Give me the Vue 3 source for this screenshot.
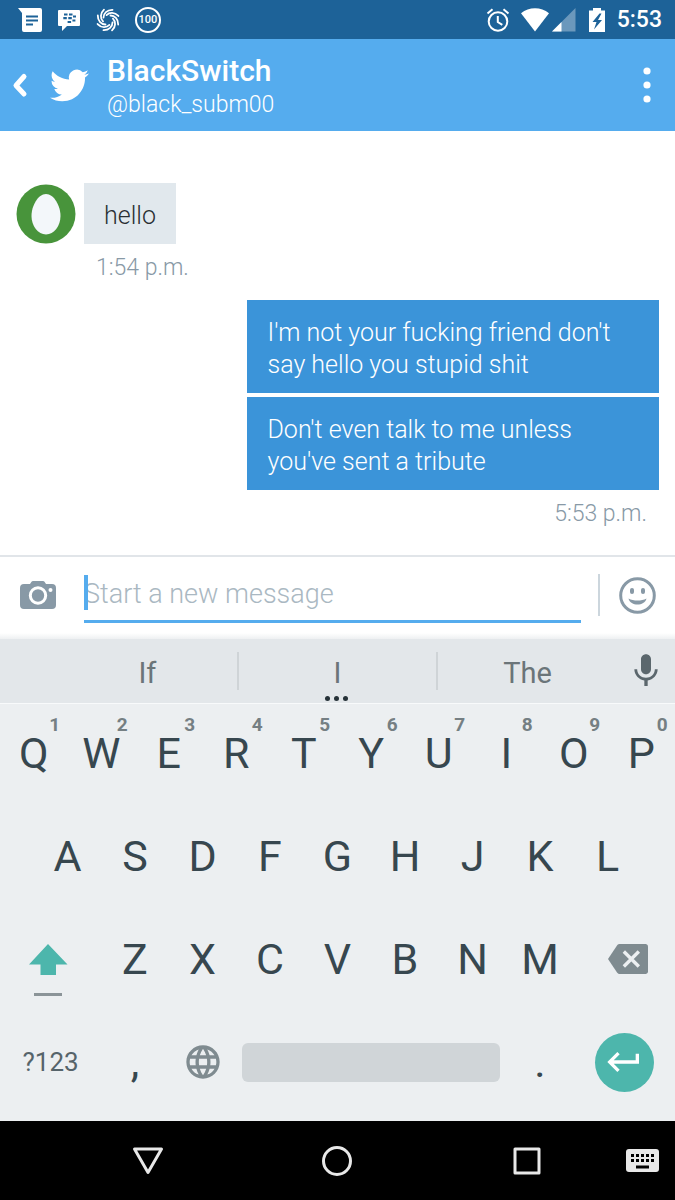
<script setup>
import { ref } from 'vue'

const message = ref('')
const suggestions = ['If', 'I', 'The']

const topRow = 'QWERTYUIOP'.split('').map((letter, index) => ({
  letter,
  hint: (index + 1) % 10
}))
const middleRow = 'ASDFGHJKL'.split('')
const bottomRow = 'ZXCVBNM'.split('')

const swirlAngles = [0, 45, 90, 135, 180, 225, 270, 315]

const typeKey = (char) => {
  message.value += char
}

const removeLast = () => {
  message.value = message.value.slice(0, -1)
}
</script>

<template>
  <div class="phone">
    <div class="status-bar">
      <div class="status-left">
        <svg width="24" height="24" viewBox="0 0 24 24">
          <path fill="#fff" d="M0 0h22a2 2 0 0 1 2 2v20a2 2 0 0 1-2 2H6a2 2 0 0 1-2-2V5z" />
          <path stroke="#1d6298" stroke-width="2" d="M8 8.500h12M8 12.500h12M8 16.500h7" />
        </svg>
        <svg width="24" height="24" viewBox="0 0 24 24">
          <path fill="#fff" d="M2 2h20a1 1 0 0 1 1 1v14a1 1 0 0 1-1 1H10l-5 5v-5H2a1 1 0 0 1-1-1V3a1 1 0 0 1 1-1z" />
          <path stroke="#1d6298" stroke-width="2.200" d="M7 6.500h3.500M12 6.500h3.500M6.300 10.200h3.500M11.300 10.200h3.500M16 8.500h3M15.400 12.500h3M10.600 14h3.500" />
        </svg>
        <svg width="24" height="24" viewBox="0 0 24 24" fill="none" stroke="#fff" stroke-width="1.800" stroke-linecap="round">
          <path
            v-for="angle in swirlAngles"
            :key="angle"
            d="M7.500 9.500C7.500 5.500 11 1.600 16.500 1.800"
            :transform="`rotate(${angle} 12 12)`"
          />
        </svg>
        <span class="percent">100</span>
      </div>
      <div class="status-right">
        <svg class="alarm" width="24" height="24" viewBox="0 0 24 24" fill="none" stroke="#fff" stroke-width="2">
          <circle cx="12" cy="13.500" r="9.300" />
          <path d="M11.800 8v6l4.500 2.800M1.500 5.500l5-4.200M22.500 5.500l-5-4.200" />
        </svg>
        <svg width="28" height="24" viewBox="0 0 28 24">
          <path fill="#fff" d="M0 5.200C8-1.400 20-1.400 28 5.200L14 23.500z" />
        </svg>
        <svg class="signal" width="24" height="24" viewBox="0 0 24 24">
          <path fill="#fff" fill-opacity=".35" d="M0 23.500L23.500 0v23.500z" />
          <path fill="#fff" d="M0 23.500l9.500-9.500v9.500z" />
        </svg>
        <svg class="battery" width="16" height="24" viewBox="0 0 16 24">
          <path fill="#fff" d="M4 0h8v2.500h4V24H0V2.500h4z" />
          <path fill="#1d6298" d="M10.500 5.500L3.500 14h4L5 21.500 13 12H9l3.500-6.500z" />
        </svg>
        <span class="clock">5:53</span>
      </div>
    </div>

    <header class="header">
      <button class="icon-button back" aria-label="Back">
        <svg width="16" height="26" viewBox="0 0 16 26" fill="none" stroke="#fff" stroke-width="5" stroke-linecap="round" stroke-linejoin="round">
          <path d="M12 4.500L4 13.500l8 8.500" />
        </svg>
      </button>
      <svg class="bird" width="39" height="39" viewBox="0 0 24 24" fill="#fff">
        <path d="M23.953 4.570a10 10 0 01-2.825.775 4.958 4.958 0 002.163-2.723c-.951.555-2.005.959-3.127 1.184a4.920 4.920 0 00-8.384 4.482C7.690 8.095 4.067 6.130 1.640 3.162a4.822 4.822 0 00-.666 2.475c0 1.710.870 3.213 2.188 4.096a4.904 4.904 0 01-2.228-.616v.060a4.923 4.923 0 003.946 4.827 4.996 4.996 0 01-2.212.085 4.936 4.936 0 004.604 3.417 9.867 9.867 0 01-6.102 2.105c-.390 0-.779-.023-1.170-.067a13.995 13.995 0 007.557 2.209c9.053 0 13.998-7.496 13.998-13.985 0-.210 0-.420-.015-.630A9.935 9.935 0 0024 4.590z" />
      </svg>
      <div class="contact">
        <h1 class="name">BlackSwitch</h1>
        <div class="handle">@black_subm00</div>
      </div>
      <button class="icon-button more" aria-label="More options">
        <svg width="8" height="36" viewBox="0 0 8 36" fill="#fff">
          <circle cx="4" cy="4" r="3.600" />
          <circle cx="4" cy="18" r="3.600" />
          <circle cx="4" cy="32" r="3.600" />
        </svg>
      </button>
    </header>

    <main class="chat">
      <div class="received">
        <svg class="avatar" width="60" height="60" viewBox="0 0 60 60">
          <circle cx="30" cy="30" r="29.500" fill="#48943b" />
          <path fill="#f3f7fa" d="M30 10c8 0 14.500 12 14.500 22S38 50.500 30 50.500 15.500 42 15.500 32 22 10 30 10z" />
        </svg>
        <p class="bubble">hello</p>
      </div>
      <div class="time time-received">1:54 p.m.</div>
      <div class="sent">
        <p class="bubble">I'm not your fucking friend don't say hello you stupid shit</p>
        <p class="bubble">Don't even talk to me unless you've sent a tribute</p>
      </div>
      <div class="time time-sent">5:53 p.m.</div>
    </main>

    <div class="composer">
      <button class="icon-button" aria-label="Add photo">
        <svg width="36" height="28" viewBox="0 0 36 28">
          <path fill="#8899a6" d="M4 3h6l1.500-2.200A2 2 0 0 1 13 0h10a2 2 0 0 1 1.500.8L26 3h6a4 4 0 0 1 4 4v17a4 4 0 0 1-4 4H4a4 4 0 0 1-4-4V7a4 4 0 0 1 4-4z" />
          <circle cx="18" cy="14.500" r="7.700" fill="none" stroke="#fff" stroke-width="3" />
          <circle cx="30.500" cy="9" r="2" fill="#fff" />
        </svg>
      </button>
      <div class="field">
        <input v-model="message" class="input" type="text" placeholder="Start a new message" aria-label="Start a new message" />
        <span v-if="!message" class="caret"></span>
      </div>
      <span class="divider"></span>
      <button class="icon-button" aria-label="Emoji">
        <svg width="37" height="37" viewBox="0 0 37 37">
          <circle cx="18.500" cy="18.500" r="16.800" fill="none" stroke="#8899a6" stroke-width="3" />
          <rect x="11" y="11" width="4" height="6" rx="2" fill="#8899a6" />
          <rect x="22" y="11" width="4" height="6" rx="2" fill="#8899a6" />
          <path fill="#8899a6" d="M9.500 21.500c5 2.800 13 2.800 18 0-2 8-16 8-18 0z" />
        </svg>
      </button>
    </div>

    <div class="keyboard">
      <div class="suggestions">
        <button v-for="word in suggestions" :key="word" class="suggestion" @click="typeKey(word + ' ')">
          {{ word }}
        </button>
        <button class="icon-button" aria-label="Voice input">
          <svg width="40" height="40" viewBox="0 0 24 24" fill="#5b676d">
            <path d="M12 14c1.660 0 3-1.340 3-3V5c0-1.660-1.340-3-3-3S9 3.340 9 5v6c0 1.660 1.340 3 3 3zm5.300-3c0 3-2.540 5.100-5.300 5.100S6.700 14 6.700 11H5c0 3.410 2.720 6.230 6 6.720V21h2v-3.280c3.280-.480 6-3.300 6-6.720h-1.700z" />
          </svg>
        </button>
      </div>

      <div class="row">
        <button v-for="key in topRow" :key="key.letter" class="key" @click="typeKey(key.letter)">
          {{ key.letter }}<span class="hint">{{ key.hint }}</span>
        </button>
      </div>
      <div class="row row-centered">
        <button v-for="letter in middleRow" :key="letter" class="key" @click="typeKey(letter)">{{ letter }}</button>
      </div>
      <div class="row">
        <button class="key wide shift" aria-label="Shift">
          <svg width="40" height="74" viewBox="0 0 40 74">
            <path fill="#4db6ac" d="M20 22l19.500 20.500H28V53H12.500V42.500H1z" />
            <path fill="#8b9498" d="M6 71h28v3H6z" />
          </svg>
        </button>
        <button v-for="letter in bottomRow" :key="letter" class="key" @click="typeKey(letter)">{{ letter }}</button>
        <button class="key wide backspace" aria-label="Delete" @click="removeLast">
          <svg width="40" height="40" viewBox="0 0 24 24">
            <path fill="#7f8b90" d="M22.500 3H7c-.690 0-1.230.350-1.590.880L0 12l5.410 8.110c.360.530.900.890 1.590.890h15.500c.800 0 1.500-.700 1.500-1.500v-15C24 3.700 23.300 3 22.500 3z" />
            <path stroke="#eceff1" stroke-width="2" d="M9.500 7.500l9 9M18.500 7.500l-9 9" />
          </svg>
        </button>
      </div>
      <div class="row">
        <button class="key wide symbols">?123</button>
        <button class="key" @click="typeKey(',')">,</button>
        <button class="key" aria-label="Switch language">
          <svg width="40" height="40" viewBox="0 0 24 24" fill="#7f8b90">
            <path d="M11.990 2C6.470 2 2 6.480 2 12s4.470 10 9.990 10C17.520 22 22 17.520 22 12S17.520 2 11.990 2zm6.930 6h-2.950a15.650 15.650 0 0 0-1.380-3.560A8.030 8.030 0 0 1 18.920 8zM12 4.040c.830 1.200 1.480 2.530 1.910 3.960h-3.820c.430-1.430 1.080-2.760 1.910-3.960zM4.260 14C4.100 13.360 4 12.690 4 12s.100-1.360.260-2h3.380c-.080.660-.140 1.320-.140 2s.060 1.340.140 2H4.260zm.820 2h2.950c.320 1.250.780 2.450 1.380 3.560A7.987 7.987 0 0 1 5.080 16zm2.950-8H5.080a7.987 7.987 0 0 1 4.330-3.560A15.650 15.650 0 0 0 8.030 8zM12 19.960c-.830-1.200-1.480-2.530-1.910-3.960h3.820c-.430 1.430-1.080 2.760-1.910 3.960zM14.340 14H9.660c-.090-.660-.160-1.320-.160-2s.070-1.350.160-2h4.680c.090.650.160 1.320.160 2s-.070 1.340-.160 2zm.250 5.560c.600-1.110 1.060-2.310 1.380-3.560h2.950a8.030 8.030 0 0 1-4.330 3.560zM16.360 14c.080-.660.140-1.320.140-2s-.060-1.340-.140-2h3.380c.160.640.260 1.310.260 2s-.100 1.360-.260 2h-3.380z" />
          </svg>
        </button>
        <button class="key space" aria-label="Space" @click="typeKey(' ')"><span class="space-bar"></span></button>
        <button class="key" @click="typeKey('.')">.</button>
        <button class="key wide" aria-label="Enter">
          <span class="enter">
            <svg width="40" height="40" viewBox="0 0 24 24" fill="#fff">
              <path d="M19 7v4H5.830l3.580-3.590L8 6l-6 6 6 6 1.410-1.410L5.830 13H21V7z" />
            </svg>
          </span>
        </button>
      </div>
    </div>

    <nav class="nav-bar">
      <button class="icon-button" aria-label="Hide keyboard">
        <svg width="32" height="32" viewBox="0 0 32 32" fill="none" stroke="#e8e8e8" stroke-width="3" stroke-linejoin="round">
          <path d="M2.500 4h27L16 27.500z" />
        </svg>
      </button>
      <button class="icon-button" aria-label="Home">
        <svg width="32" height="32" viewBox="0 0 32 32" fill="none" stroke="#e8e8e8" stroke-width="3">
          <circle cx="16" cy="16" r="13.500" />
        </svg>
      </button>
      <button class="icon-button" aria-label="Recent apps">
        <svg width="32" height="32" viewBox="0 0 32 32" fill="none" stroke="#e8e8e8" stroke-width="3" stroke-linejoin="round">
          <rect x="4" y="4" width="24" height="24" />
        </svg>
      </button>
      <button class="icon-button switcher" aria-label="Choose keyboard">
        <svg width="33" height="23" viewBox="0 0 33 23">
          <rect width="33" height="23" rx="3" fill="#e8e8e8" />
          <path stroke="#000" stroke-width="3" stroke-dasharray="3 2" d="M5 6.500h23M5 11.500h23" />
          <path fill="#000" d="M10 16.500h13v3H10z" />
        </svg>
      </button>
    </nav>
  </div>
</template>

<style>
body {
  margin: 0;
  background: #fff;
}
</style>

<style scoped>
.phone {
  display: flex;
  flex-direction: column;
  min-height: 100vh;
  font-family: Roboto, "Liberation Sans", sans-serif;
}

svg {
  display: block;
  flex-shrink: 0;
}

button {
  margin: 0;
  padding: 0;
  border: 0;
  background: none;
  font-family: inherit;
  cursor: pointer;
}

.icon-button {
  display: flex;
  align-items: center;
  justify-content: center;
}

.status-bar {
  display: flex;
  align-items: center;
  justify-content: space-between;
  height: 39px;
  padding: 0 13px 0 18px;
  background: #1d6298;
  color: #fff;
}

.status-left,
.status-right {
  display: flex;
  align-items: center;
}

.status-left {
  gap: 15px;
}

.percent {
  display: flex;
  justify-content: center;
  box-sizing: border-box;
  width: 26px;
  height: 26px;
  border: 2px solid #fff;
  border-radius: 50%;
  font-size: 11px;
  font-weight: 500;
  line-height: 22px;
}

.alarm {
  margin-right: 11px;
}

.signal {
  margin-left: 3px;
}

.battery {
  margin-left: 13px;
}

.clock {
  margin-left: 12px;
  font-size: 23px;
  font-weight: 500;
  line-height: 32px;
}

.header {
  display: flex;
  align-items: center;
  height: 92px;
  background: #55acee;
  color: #fff;
}

.back {
  width: 40px;
  height: 92px;
}

.bird {
  margin-left: 10px;
}

.contact {
  flex: 1;
  min-width: 0;
  margin-left: 18px;
  padding-top: 4px;
}

.name {
  margin: 0;
  font-size: 30px;
  font-weight: 500;
  line-height: 36px;
}

.handle {
  font-size: 23px;
  font-weight: 300;
  line-height: 32px;
}

.more {
  width: 56px;
  height: 92px;
}

.chat {
  flex: 1;
  padding: 52px 16px 24px;
  background: #fff;
}

.received {
  display: flex;
  align-items: center;
  gap: 8px;
}

.bubble {
  margin: 0;
  padding: 17px 20px 12px;
  font-size: 25px;
  font-weight: 300;
  line-height: 32px;
}

.received .bubble {
  background: #e1e8ed;
  color: #292f33;
}

.sent {
  display: flex;
  flex-direction: column;
  align-items: flex-end;
  gap: 4px;
  margin-top: 16px;
}

.sent .bubble {
  box-sizing: border-box;
  max-width: 64%;
  background: #3b94d9;
  color: #fff;
}

.time {
  margin-top: 8px;
  color: #8899a6;
  font-size: 23px;
  font-weight: 300;
  line-height: 32px;
}

.time-received {
  padding-left: 80px;
}

.time-sent {
  padding-right: 12px;
  text-align: right;
}

.composer {
  display: flex;
  box-sizing: border-box;
  align-items: center;
  height: 84px;
  padding: 0 19px 6px 20px;
  border-top: 2px solid #e1e5e9;
  background: linear-gradient(#fff, #fff 76px, #eef0f2);
}

.field {
  position: relative;
  flex: 1;
  min-width: 0;
  margin-left: 28px;
  margin-right: 17px;
}

.input {
  display: block;
  box-sizing: border-box;
  width: 100%;
  height: 56px;
  padding: 0;
  border: 0;
  border-bottom: 3px solid #55acee;
  outline: 0;
  background: transparent;
  color: #292f33;
  font-family: inherit;
  font-size: 27px;
  font-weight: 300;
}

.input::placeholder {
  color: #aab8c2;
  opacity: 1;
}

.caret {
  position: absolute;
  left: 0;
  top: 8px;
  width: 4px;
  height: 35px;
  background: #55acee;
}

.divider {
  width: 2px;
  height: 42px;
  margin-right: 19px;
  background: #ccd6dd;
}

.keyboard {
  padding-bottom: 5px;
  background: #eceff1;
}

.suggestions {
  display: grid;
  grid-template-columns: 8fr 9fr 8fr 58px;
  height: 64px;
  padding-left: 58px;
  border-bottom: 1px solid #f8fafb;
  background: #e3e7ea;
}

.suggestion {
  position: relative;
  padding-top: 3px;
  color: #6b7579;
  font-size: 29px;
  line-height: 60px;
}

/* separators on both sides of the middle word */
.suggestion:nth-child(2)::before {
  content: "";
  position: absolute;
  inset: 13px 0;
  border: 0 solid #cfd4d7;
  border-width: 0 2px;
}

.suggestion:nth-child(2)::after {
  content: "";
  position: absolute;
  left: 50%;
  bottom: 2px;
  width: 5px;
  height: 5px;
  margin-left: -3px;
  border-radius: 50%;
  background: #263238;
  box-shadow: -9px 0 #263238, 9px 0 #263238;
}

.row {
  display: flex;
  height: 103px;
}

.row-centered {
  justify-content: center;
}

.key {
  position: relative;
  display: flex;
  align-items: center;
  justify-content: center;
  width: 10%;
  padding-bottom: 5px;
  color: #37474f;
  font-size: 43px;
  line-height: 50px;
}

.wide {
  width: 15%;
}

.space {
  width: 40%;
  padding-left: 6px;
  padding-right: 6px;
}

.shift {
  padding-right: 6px;
}

.backspace {
  padding-left: 8px;
}

.symbols {
  color: #56646a;
  font-size: 26px;
}

.hint {
  position: absolute;
  left: 50%;
  top: 10px;
  width: 12px;
  margin-left: 15px;
  color: #757f83;
  font-size: 19px;
  font-weight: 700;
  line-height: 22px;
}

.space-bar {
  flex: 1;
  height: 39px;
  border-radius: 6px;
  background: #d0d5d8;
}

.enter {
  display: flex;
  align-items: center;
  justify-content: center;
  width: 59px;
  height: 59px;
  border-radius: 50%;
  background: #4db6ac;
}

.nav-bar {
  display: grid;
  grid-template-columns: 1fr 1fr 1fr 53px;
  height: 79px;
  padding-left: 53px;
  background: #000;
}

.switcher {
  justify-content: flex-start;
  padding-left: 4px;
}
</style>
